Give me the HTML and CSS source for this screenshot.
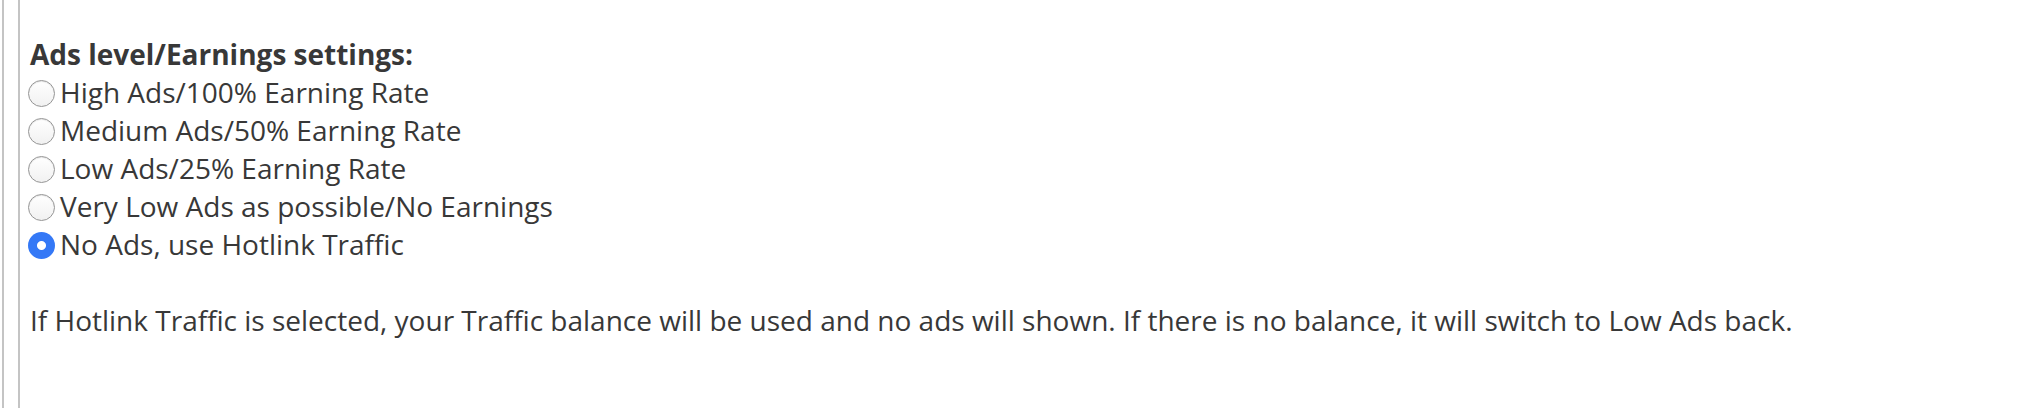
FILE: index.html
```html
<!DOCTYPE html>
<html lang="en">
<head>
    <meta charset="UTF-8">
    <meta name="viewport" content="width=device-width, initial-scale=1.0">
    <title>Ads settings</title>
    <link rel="stylesheet" href="styles.css">
</head>
<body>
    <!-- outer frame with the two grey rules on the left -->
    <div class="frame">
        <div class="panel">
            <form class="ads-form">
                <b class="ads-title">Ads level/Earnings settings:</b>
                <label class="ads-option"><input type="radio" name="ads_level" value="high">High Ads/100% Earning Rate</label>
                <label class="ads-option"><input type="radio" name="ads_level" value="medium">Medium Ads/50% Earning Rate</label>
                <label class="ads-option"><input type="radio" name="ads_level" value="low">Low Ads/25% Earning Rate</label>
                <label class="ads-option"><input type="radio" name="ads_level" value="verylow">Very Low Ads as possible/No Earnings</label>
                <label class="ads-option"><input type="radio" name="ads_level" value="hotlink" checked>No Ads, use Hotlink Traffic</label>
                <p class="ads-note">If Hotlink Traffic is selected, your Traffic balance will be used and no ads will shown. If there is no balance, it will switch to Low Ads back.</p>
            </form>
        </div>
    </div>
</body>
</html>
```

FILE: styles.css
```css
/* page base */
body {
    margin: 0;
    background: #fff;
    font-family: "Open Sans", Arial, sans-serif;
    color: #383838;
}

.frame {
    margin-left: 2px;
    border-left: 2px solid #c4c4c4;
    height: 408px;
    box-sizing: border-box;
    padding-left: 14px;
}

.panel {
    border-left: 2px solid #c4c4c4;
    height: 100%;
    padding: 35px 0 0 10px;
    box-sizing: border-box;
}

.ads-form {
    font-size: 28px;
    line-height: 38px;
}

.ads-title {
    display: block;
    font-weight: bold;
}

.ads-option {
    display: flex;
    align-items: center;
}

/* radio buttons drawn by hand so they look the same everywhere */
.ads-option input {
    -webkit-appearance: none;
    appearance: none;
    width: 27px;
    height: 27px;
    margin: 2px 5px 0 -2px;
    border-radius: 50%;
    border: 1px solid #959595;
    background: linear-gradient(#fff, #f1f1f1);
    box-shadow: inset 0 1px 1px rgba(0, 0, 0, 0.1);
    box-sizing: border-box;
}

.ads-option input:checked {
    border: none;
    background: radial-gradient(circle, #fff 0, #fff 4px, #3478f6 5px);
    box-shadow: none;
}

.ads-note {
    margin: 38px 0 0 0;
}
```
